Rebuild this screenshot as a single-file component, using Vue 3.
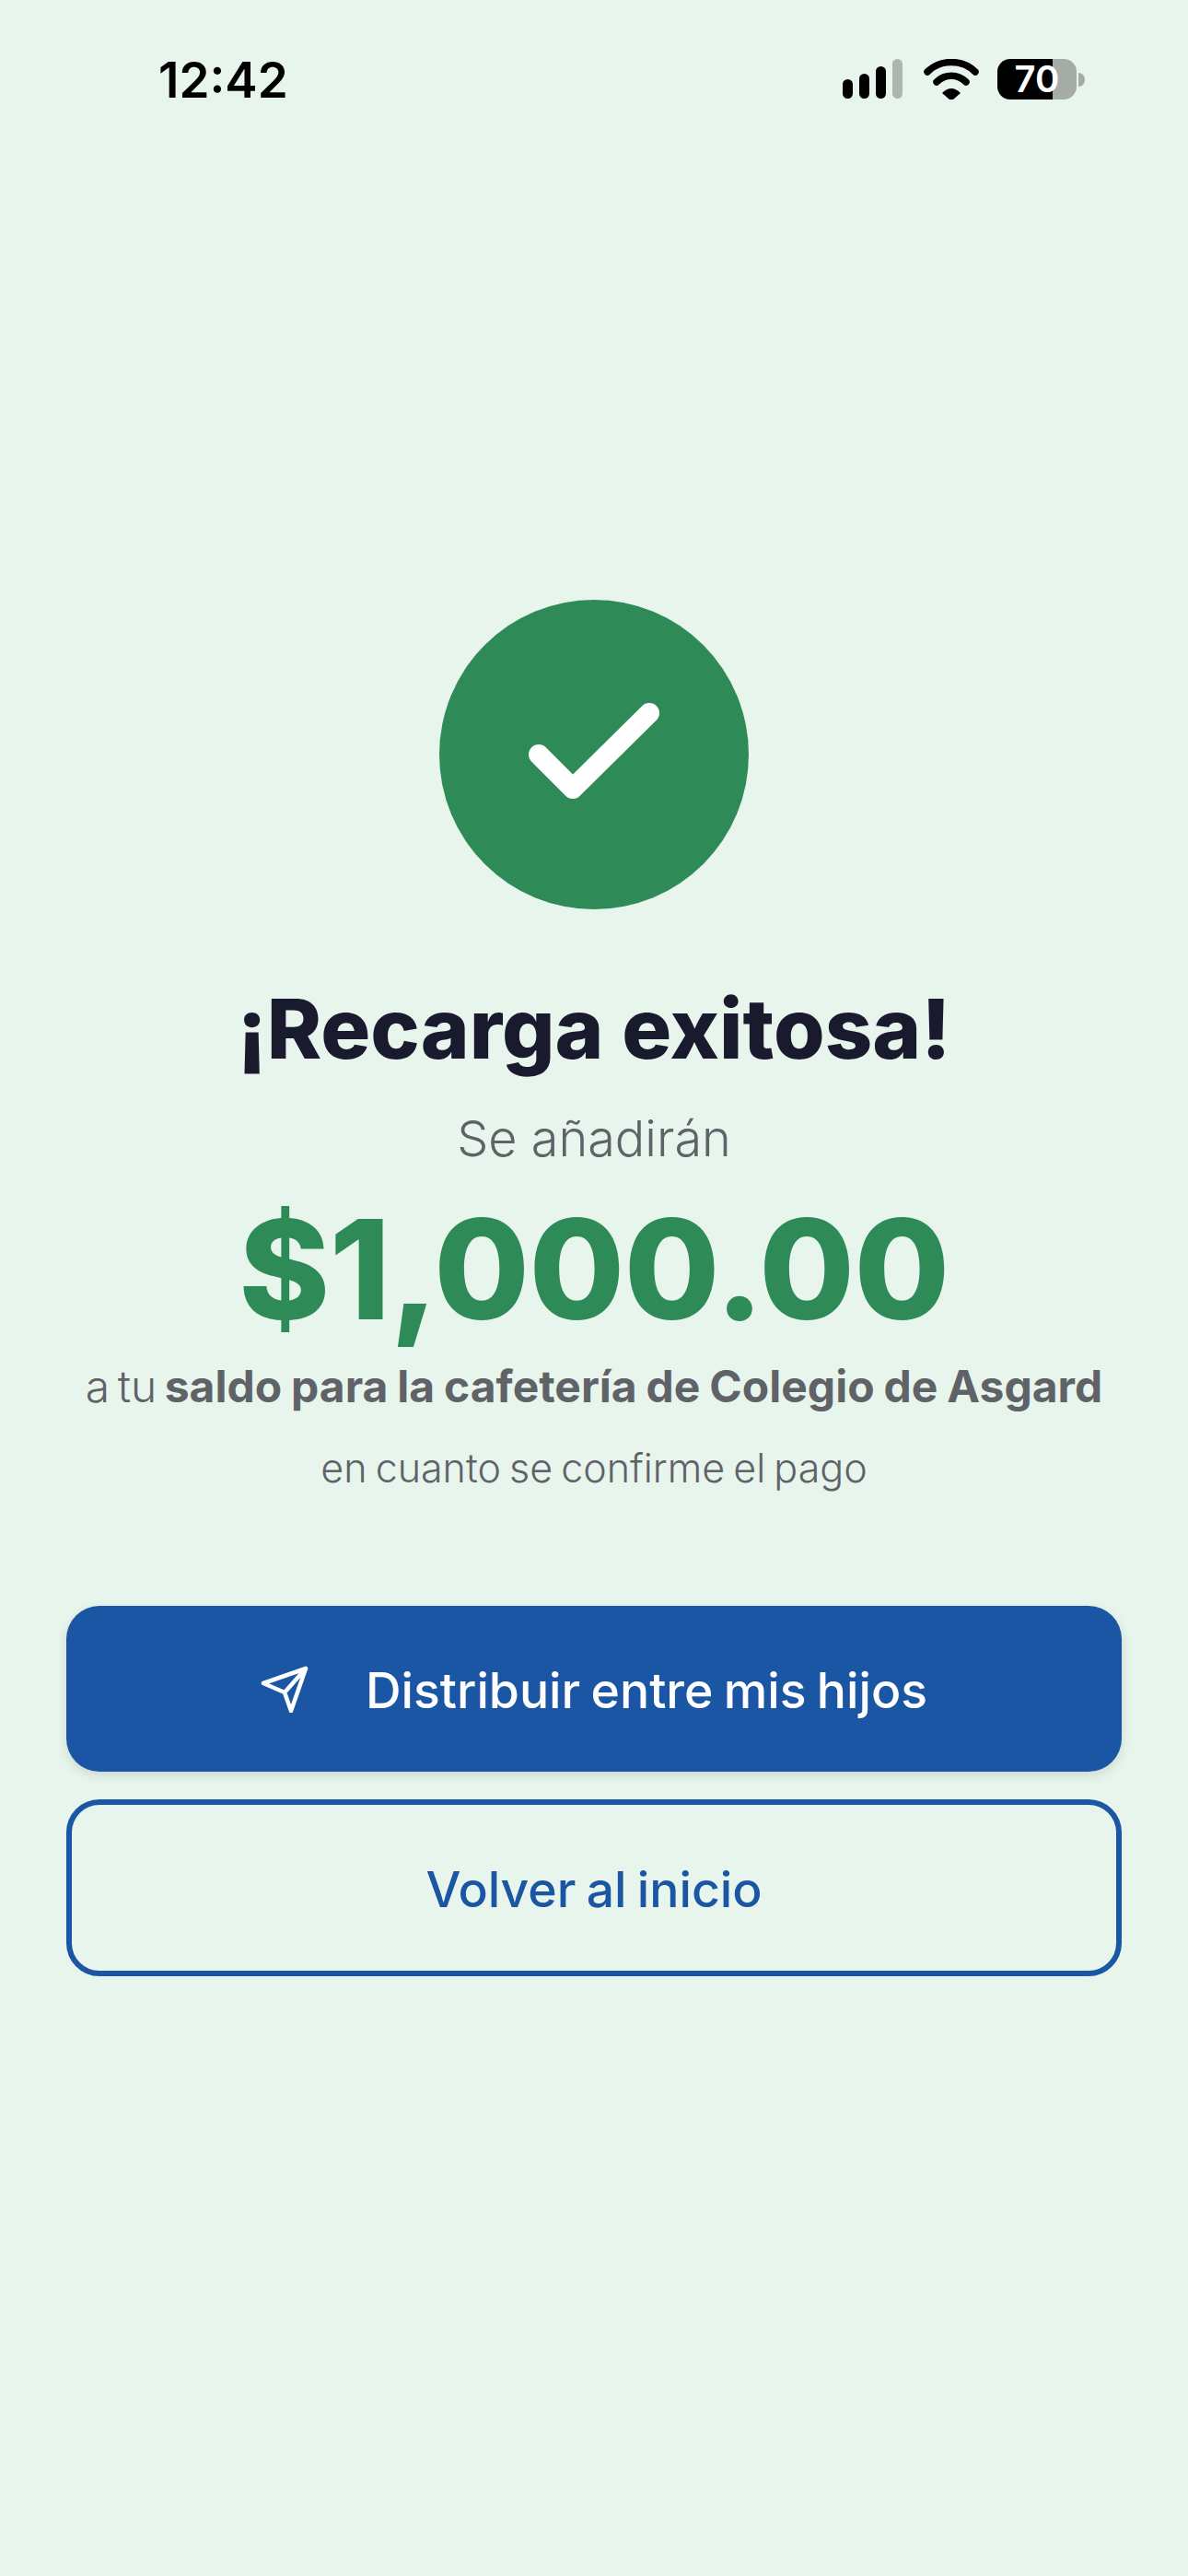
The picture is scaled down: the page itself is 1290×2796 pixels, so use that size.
<script setup>
const bars = [
  { h: 21, on: true },
  { h: 27, on: true },
  { h: 35, on: true },
  { h: 43, on: false },
]
</script>

<template>
  <div class="screen">
    <header class="status">
      <span class="time">12:42</span>
      <div class="status-icons">
        <div class="signal">
          <i v-for="(b, i) in bars" :key="i" :class="{ off: !b.on }" :style="{ height: b.h + 'px' }"></i>
        </div>
        <svg class="wifi" width="60" height="44" viewBox="0 0 60 44">
          <path d="M4 14 C18 0 42 0 56 14" fill="none" stroke="#000" stroke-width="7.5" stroke-linecap="round" />
          <path d="M14 25 C23 16 37 16 46 25" fill="none" stroke="#000" stroke-width="7.5" stroke-linecap="round" />
          <path d="M20 37 Q30 27 40 37 L32 44 Q30 45 28 44 Z" fill="#000" />
        </svg>
        <div class="battery"><span>70</span></div>
        <div class="battery-cap"></div>
      </div>
    </header>

    <main class="content">
      <div class="check">
        <svg width="142" height="104" viewBox="0 0 142 104">
          <path d="M11 56 L48 93 L131 11" fill="none" stroke="#fff" stroke-width="22" stroke-linecap="round" stroke-linejoin="round" />
        </svg>
      </div>
      <h1 class="title">¡Recarga exitosa!</h1>
      <p class="lead">Se añadirán</p>
      <p class="amount">$1,000.00</p>
      <p class="target">a tu <strong>saldo para la cafetería de Colegio de Asgard</strong></p>
      <p class="note">en cuanto se confirme el pago</p>

      <div class="actions">
        <button class="btn primary">
          <svg class="send" width="52" height="52" viewBox="0 0 52 52">
            <path d="M49 4 L3 20 L26 30 L33 50 Z M49 4 L26 30" fill="none" stroke="#fff" stroke-width="4.5" stroke-linejoin="round" stroke-linecap="round" />
          </svg>
          <span>Distribuir entre mis hijos</span>
        </button>
        <button class="btn outline"><span>Volver al inicio</span></button>
      </div>
    </main>
  </div>
</template>

<style>
body {
  background: #e8f5ed;
}
</style>

<style scoped>
.screen {
  width: 1290px;
  height: 2796px;
  background: #e8f5ed;
  font-family: Inter, "Liberation Sans", sans-serif;
  overflow: hidden;
}

.status {
  display: flex;
  justify-content: space-between;
  align-items: flex-start;
  height: 587px;
  padding: 64px 112px 0 172px;
  box-sizing: border-box;
}

.time {
  font-size: 53px;
  line-height: 46px;
  font-weight: 600;
  color: #000;
}

.status-icons {
  display: flex;
  align-items: flex-start;
}

.signal {
  display: flex;
  align-items: flex-end;
  gap: 7px;
  height: 43px;
  margin-right: 23px;
}

.signal i {
  display: block;
  width: 11px;
  background: #000;
  border-radius: 6px;
}

.signal i.off {
  background: #aeb4b0;
}

.wifi {
  margin-right: 20px;
}

.battery {
  display: flex;
  align-items: center;
  justify-content: center;
  width: 86px;
  height: 44px;
  border-radius: 14px;
  background: linear-gradient(90deg, #000 60px, #a5aba7 60px);
  color: #fff;
  font-size: 40px;
  font-weight: 600;
  line-height: 44px;
}

.battery-cap {
  width: 7px;
  height: 15px;
  margin: 15px 0 0 2px;
  border-radius: 0 8px 8px 0;
  background: #a5aba7;
}

.content {
  display: flex;
  flex-direction: column;
  align-items: center;
  padding: 64px 72px 0;
}

.check {
  display: flex;
  align-items: center;
  justify-content: center;
  width: 336px;
  height: 336px;
  border-radius: 50%;
  background: #2e8b57;
}

.check svg {
  margin-top: -8px;
}

.title {
  margin: 75px 0 0;
  font-size: 90px;
  line-height: 110px;
  font-weight: 800;
  color: #1a1a2e;
}

.lead {
  margin: 31px 0 0;
  font-size: 54px;
  line-height: 66px;
  font-weight: 300;
  color: #5f6368;
}

.amount {
  margin: 29px 0 0;
  font-size: 150px;
  line-height: 160px;
  font-weight: 800;
  letter-spacing: -0.5px;
  color: #2e8b57;
}

.target {
  margin: 17px 0 0;
  font-size: 48px;
  line-height: 60px;
  font-weight: 300;
  word-spacing: -5px;
  color: #5f6368;
  white-space: nowrap;
}

.target strong {
  font-weight: 700;
  word-spacing: -1.5px;
}

.note {
  margin: 33px 0 0;
  font-size: 43px;
  line-height: 50px;
  font-weight: 300;
  word-spacing: -3px;
  color: #5f6368;
}

.actions {
  display: flex;
  flex-direction: column;
  gap: 30px;
  width: 100%;
  margin-top: 125px;
}

.btn {
  display: flex;
  align-items: center;
  justify-content: center;
  width: 100%;
  border-radius: 36px;
  font-family: inherit;
  font-size: 53.5px;
  font-weight: 500;
  word-spacing: -3px;
  box-sizing: border-box;
}

.btn span {
  padding-top: 3px;
}

.primary {
  gap: 62px;
  height: 180px;
  border: none;
  background: #1a56a4;
  color: #fff;
  box-shadow: 0 4px 12px rgba(0, 0, 0, 0.12);
}

.outline {
  height: 192px;
  border: 6px solid #1a56a4;
  background: transparent;
  color: #1a56a4;
}
</style>
